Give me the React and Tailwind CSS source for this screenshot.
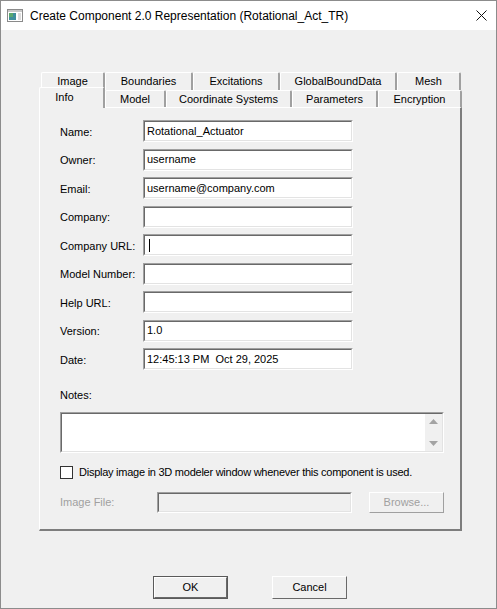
import React from 'react';

const font = { fontFamily: '"Liberation Sans", Arial, sans-serif' };

function Field({ value, caret, disabled, className = '' }) {
    return (
        <div className={`border border-t-[#a0a0a0] border-l-[#a0a0a0] border-r-white border-b-white ${className}`}>
            <div
                className={`h-full border border-t-[#696969] border-l-[#696969] border-r-[#e3e3e3] border-b-[#e3e3e3] flex items-center px-[2px] text-[11px] text-black whitespace-pre ${disabled ? 'bg-[#f0f0f0]' : 'bg-white'}`}
            >
                {caret && <div className="ml-[2px] h-[13px] w-px bg-black" />}
                {value}
            </div>
        </div>
    );
}

function Tab({ label, width, className = '' }) {
    return (
        <div
            className={`flex items-center justify-center border-l border-t border-white border-r-2 border-r-[#a0a0a0] rounded-t-[2px] bg-[#f0f0f0] text-[11px] text-black ${className}`}
            style={{ width }}
        >
            {label}
        </div>
    );
}

function Button({ label, primary }) {
    return (
        <div className={`w-[75px] h-[23px] ${primary ? 'border border-[#5a5a5a]' : ''}`}>
            <div className="h-full flex items-center justify-center border border-t-white border-l-white border-r-[#696969] border-b-[#696969] bg-[#f0f0f0] text-[11px] text-black">
                {label}
            </div>
        </div>
    );
}

const rows = [
    ['Name:', 'Rotational_Actuator'],
    ['Owner:', 'username'],
    ['Email:', 'username@company.com'],
    ['Company:', ''],
    ['Company URL:', '', true],
    ['Model Number:', ''],
    ['Help URL:', ''],
    ['Version:', '1.0'],
    ['Date:', '12:45:13 PM  Oct 29, 2025'],
];

export default function App() {
    return (
        <div className="w-[497px] h-[609px] border border-[#8c8c8c] bg-[#f0f0f0] flex flex-col overflow-hidden" style={font}>
            {/* title bar */}
            <div className="h-[29px] bg-white flex items-center pl-[6px] pr-[9px]">
                <svg width="16" height="13" viewBox="0 0 16 13" className="shrink-0">
                    <rect x="0.5" y="0.5" width="15" height="12" fill="#ffffff" stroke="#8a8a8a" />
                    <rect x="1" y="1" width="14" height="2" fill="#c8c8c8" />
                    <rect x="2" y="4" width="7" height="7" fill="#3f8f9c" />
                    <rect x="2" y="4" width="4" height="4" fill="#5aa86e" />
                    <rect x="11" y="4" width="3" height="7" fill="#dcdcdc" />
                </svg>
                <div className="ml-[7px] text-[12px] text-black whitespace-nowrap">
                    Create Component 2.0 Representation (Rotational_Act_TR)
                </div>
                <svg width="11" height="11" viewBox="0 0 11 11" className="ml-auto">
                    <path d="M0.5 0.5 L10.5 10.5 M10.5 0.5 L0.5 10.5" stroke="#111" strokeWidth="1" />
                </svg>
            </div>

            <div className="pl-[38px] pt-[42px]">
                <div className="w-[423px]">
                    {/* back row of tabs */}
                    <div className="flex h-[18px] pl-[2px]">
                        <Tab label="Image" width={64} />
                        <Tab label="Boundaries" width={88} />
                        <Tab label="Excitations" width={87} />
                        <Tab label="GlobalBoundData" width={117} />
                        <Tab label="Mesh" width={64} />
                    </div>
                    {/* front row of tabs */}
                    <div className="flex h-[17px] items-start">
                        <Tab label="Info" width={66} className="relative z-10 -mt-[3px] h-[21px] pr-[14px] pb-[2px]" />
                        <Tab label="Model" width={61} className="h-[17px]" />
                        <Tab label="Coordinate Systems" width={126} className="h-[17px]" />
                        <Tab label="Parameters" width={86} className="h-[17px]" />
                        <Tab label="Encryption" width={84} className="h-[17px]" />
                    </div>

                    {/* panel */}
                    <div className="h-[424px] border-l border-t border-white border-r-2 border-b-2 border-r-[#7d7d7d] border-b-[#7d7d7d] pl-[20px] pt-[12px]">
                        <div className="flex flex-col gap-[6.5px]">
                            {rows.map(([label, value, caret]) => (
                                <div key={label} className="flex items-center h-[22px]">
                                    <div className="w-[83px] text-[11px] text-black pt-[2px]">{label}</div>
                                    <Field value={value} caret={caret} className="w-[210px] h-[22px]" />
                                </div>
                            ))}
                        </div>

                        <div className="mt-[19px] h-[13px] text-[11px] text-black leading-[13px]">Notes:</div>

                        <div className="mt-[10px] w-[384px] h-[41px] border border-t-[#a0a0a0] border-l-[#a0a0a0] border-r-white border-b-white">
                            <div className="h-full flex border border-t-[#696969] border-l-[#696969] border-r-[#e3e3e3] border-b-[#e3e3e3] bg-white">
                                <div className="flex-1" />
                                <div className="w-[17px] bg-[#f0f0f0] flex flex-col items-center justify-between py-[5px]">
                                    <svg width="9" height="5" viewBox="0 0 9 5">
                                        <path d="M0 5 L4.5 0 L9 5 Z" fill="#a3a3a3" />
                                    </svg>
                                    <svg width="9" height="5" viewBox="0 0 9 5">
                                        <path d="M0 0 L9 0 L4.5 5 Z" fill="#a3a3a3" />
                                    </svg>
                                </div>
                            </div>
                        </div>

                        <div className="mt-[13px] flex items-center h-[13px]">
                            <div className="w-[13px] h-[13px] border border-[#333333] bg-white shrink-0" />
                            <div className="ml-[6px] text-[11px] text-black whitespace-nowrap tracking-[-0.25px]">
                                Display image in 3D modeler window whenever this component is used.
                            </div>
                        </div>

                        <div className="mt-[13px] flex items-center h-[21px]">
                            <div className="w-[97px] text-[11px] text-[#a0a0a0]">Image File:</div>
                            <Field value="" disabled className="w-[195px] h-[21px]" />
                            <div className="ml-[17px] w-[75px] h-[21px] border border-t-white border-l-white border-r-[#a0a0a0] border-b-[#a0a0a0] flex items-center justify-center text-[11px] text-[#a0a0a0]">
                                Browse...
                            </div>
                        </div>
                    </div>
                </div>

                {/* buttons */}
                <div className="mt-[45px] ml-[114px] flex gap-[44px]">
                    <Button label="OK" primary />
                    <Button label="Cancel" />
                </div>
            </div>
        </div>
    );
}
